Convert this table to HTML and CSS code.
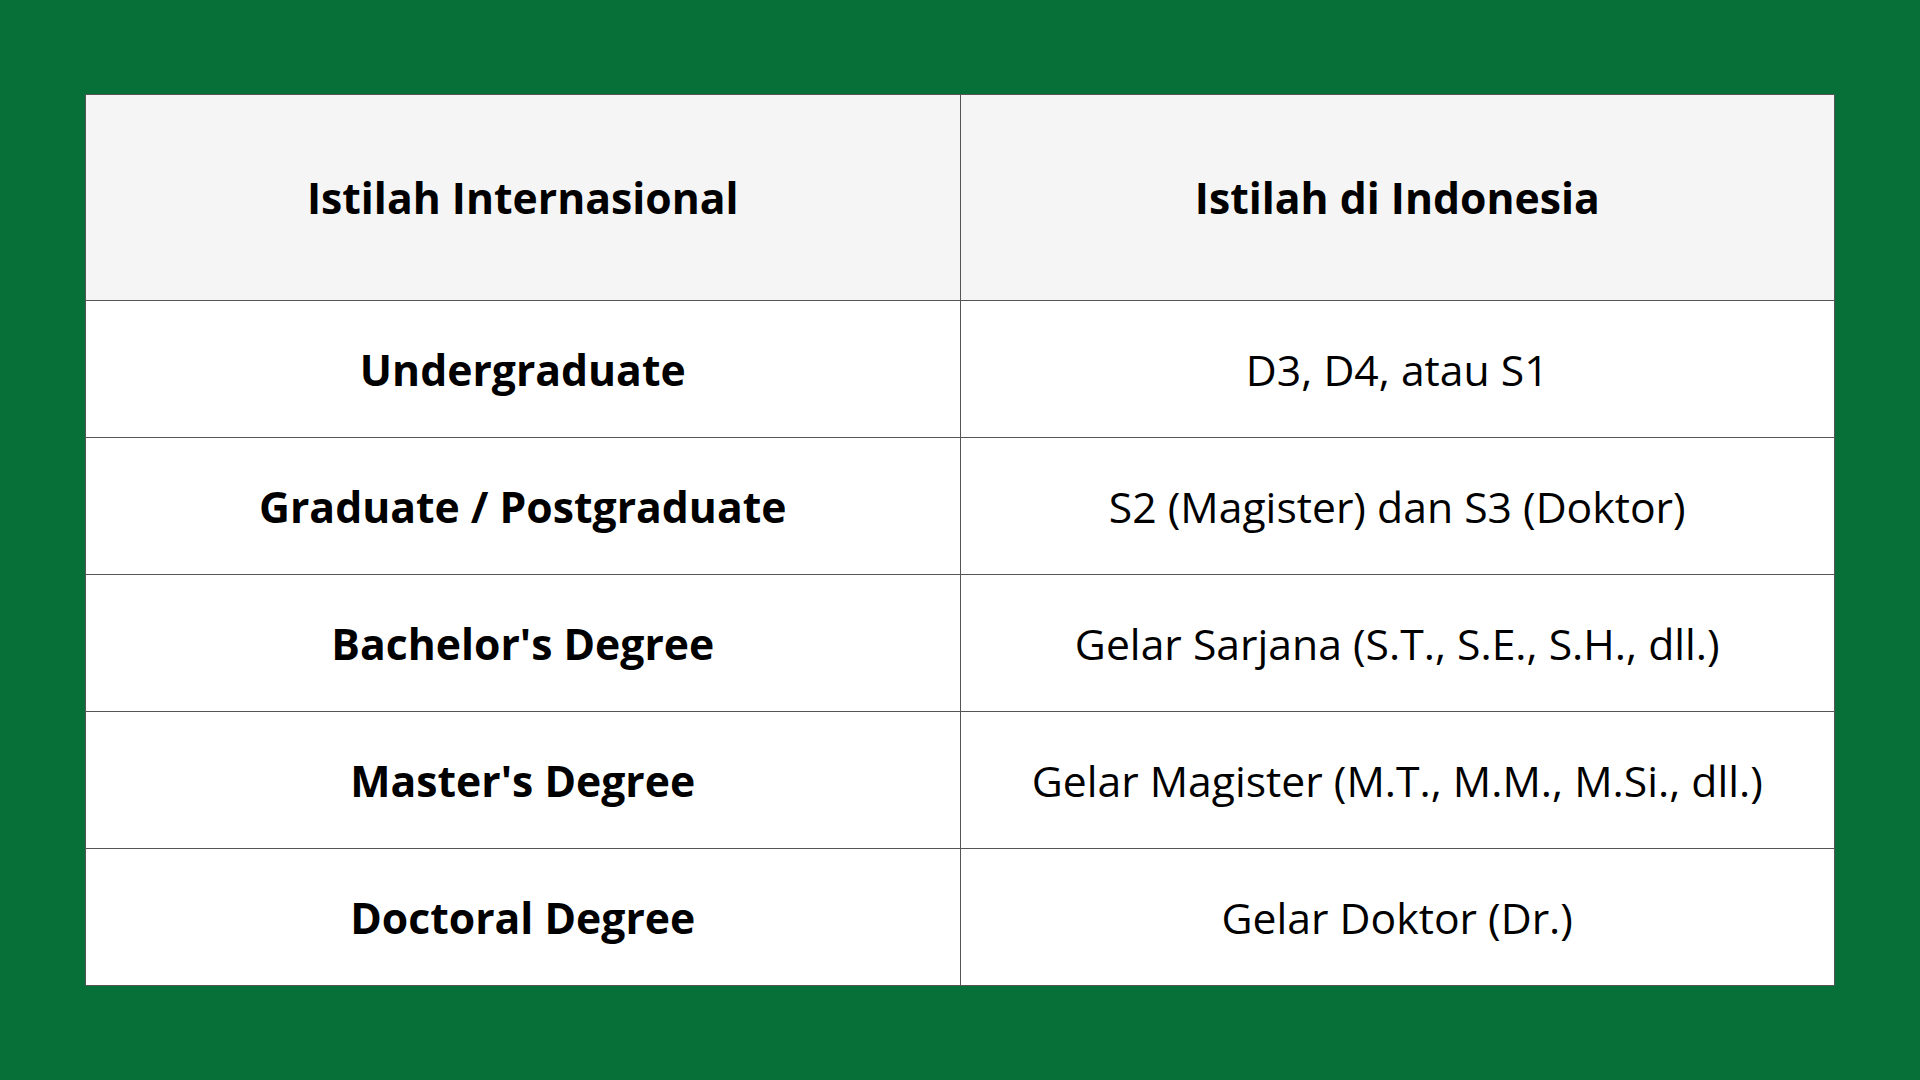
FILE: index.html
```html
<!DOCTYPE html>
<html lang="id">
<head>
<meta charset="utf-8">
<title>Istilah</title>
<link rel="stylesheet" href="styles.css">
</head>
<body>
<main class="page">
<table class="terms">
<thead>
<tr><th>Istilah Internasional</th><th>Istilah di Indonesia</th></tr>
</thead>
<tbody>
<tr><td class="en">Undergraduate</td><td>D3, D4, atau S1</td></tr>
<tr><td class="en">Graduate / Postgraduate</td><td>S2 (Magister) dan S3 (Doktor)</td></tr>
<tr><td class="en">Bachelor's Degree</td><td>Gelar Sarjana (S.T., S.E., S.H., dll.)</td></tr>
<tr><td class="en">Master's Degree</td><td>Gelar Magister (M.T., M.M., M.Si., dll.)</td></tr>
<tr><td class="en">Doctoral Degree</td><td>Gelar Doktor (Dr.)</td></tr>
</tbody>
</table>
</main>
</body>
</html>
```
FILE: styles.css
```css
html, body {
  margin: 0;
  padding: 0;
  background: #077038;
}
.page {
  width: 1920px;
  height: 1080px;
  box-sizing: border-box;
  padding: 94px 85px 0 85px;
  font-family: "Open Sans", "Liberation Sans", sans-serif;
}
.terms {
  width: 1750px;
  border-collapse: collapse;
  table-layout: fixed;
  background: #ffffff;
  border: 1px solid #1f2a22;
}
.terms th, .terms td {
  border: 1px solid #555555;
  text-align: center;
  vertical-align: middle;
  color: #000000;
  padding: 0;
}
.terms th {
  height: 205px;
  background: #f5f5f5;
  font-size: 42.7px;
  font-weight: 700;
}
.terms td {
  height: 136px;
  font-size: 42.7px;
  font-weight: 400;
}
.terms td.en {
  font-weight: 700;
}
```
